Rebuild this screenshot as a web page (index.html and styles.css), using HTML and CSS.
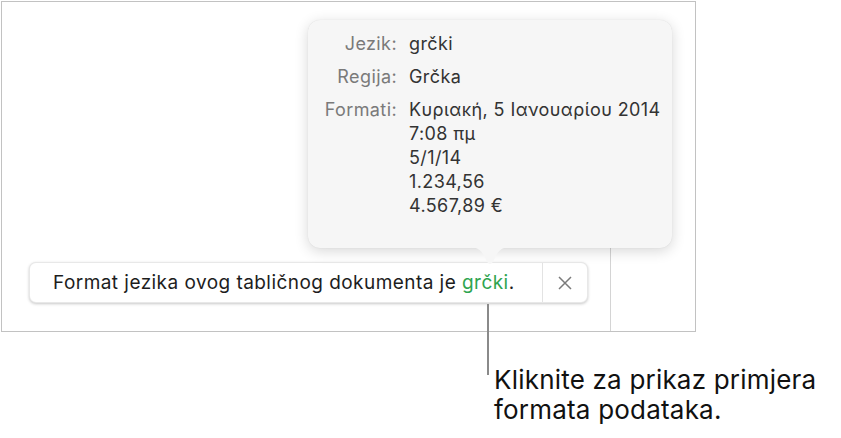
FILE: index.html
```html
<!DOCTYPE html>
<html lang="hr">
<head>
    <meta charset="UTF-8">
    <title>Format jezika</title>
    <link rel="stylesheet" href="styles.css">
</head>
<body>
    <div class="figure">
        <div class="frame">
            <div class="sheet-top"></div>
            <div class="sheet-bottom">
                <div class="sheet-left">
                    <div class="notice">
                        <div class="notice-text">Format jezika ovog tabličnog dokumenta je <span class="lang-link">grčki</span>.</div>
                        <button class="notice-close" aria-label="Zatvori">
                            <svg width="14" height="14" viewBox="0 0 14 14">
                                <path d="M1 1 L13 13 M13 1 L1 13" stroke="#7b7b7b" stroke-width="1.5" fill="none"/>
                            </svg>
                        </button>
                    </div>
                </div>
                <div class="sheet-right"></div>
            </div>

            <div class="popover">
                <div class="info-grid">
                    <div class="info-label">Jezik:</div>
                    <div class="info-value">grčki</div>
                    <div class="info-label">Regija:</div>
                    <div class="info-value">Grčka</div>
                    <div class="info-label">Formati:</div>
                    <div class="info-value">
                        Κυριακή, 5 Ιανουαρίου 2014<br>
                        7:08 πμ<br>
                        5/1/14<br>
                        1.234,56<br>
                        4.567,89 €
                    </div>
                </div>
                <svg class="popover-arrow" width="44" height="20" viewBox="0 0 44 20">
                    <path d="M0 0 C10 0 14 3 18 13 Q22 21 26 13 C30 3 34 0 44 0 Z" fill="#f6f6f6"/>
                </svg>
            </div>
        </div>

        <div class="callout">Kliknite za prikaz primjera<br>formata podataka.</div>
    </div>
</body>
</html>
```

FILE: styles.css
```css
:root {
    --frame-line: #c2c2c2;
    --grid-line: #d4d4d4;
    --popover-bg: #f6f6f6;
    --label-color: #7a7a7a;
    --value-color: #333;
    --text-color: #1d1d1d;
    --green: #2ea44f;
}

body {
    margin: 0;
    background: #fff;
    font-family: Inter, "Noto Sans", sans-serif;
    color: var(--text-color);
}

.figure {
    position: relative;
    width: 841px;
    height: 438px;
}

.frame {
    position: relative;
    margin: 1px 0 0 1px;
    width: 693px;
    height: 329px;
    border: 1px solid var(--frame-line);
    display: flex;
    flex-direction: column;
}

.sheet-top {
    height: 246px;
}

.sheet-bottom {
    flex: 1;
    display: flex;
}

.sheet-left {
    width: 608px;
    padding: 14px 0 0 27px;
    box-sizing: border-box;
}

.sheet-right {
    flex: 1;
    border-left: 1px solid var(--grid-line);
}

.notice {
    width: 559px;
    height: 41px;
    box-sizing: border-box;
    display: flex;
    align-items: stretch;
    background: #fff;
    border: 1px solid rgba(0, 0, 0, 0.09);
    border-radius: 7px;
    box-shadow: 0 1px 3px rgba(0, 0, 0, 0.22);
}

.notice-text {
    flex: 1;
    display: flex;
    align-items: center;
    padding-left: 23px;
    font-size: 19px;
    letter-spacing: 0.45px;
    white-space: pre;
}

.lang-link {
    color: var(--green);
}

.notice-close {
    width: 45px;
    border: none;
    border-left: 1px solid #e3e3e3;
    background: none;
    padding: 0;
    display: flex;
    align-items: center;
    justify-content: center;
}

.popover {
    position: absolute;
    left: 306px;
    top: 18px;
    width: 364px;
    height: 228px;
    box-sizing: border-box;
    padding: 12px 0 0 16px;
    background: var(--popover-bg);
    border-radius: 12px;
    box-shadow: 0 3px 14px rgba(0, 0, 0, 0.16), 0 0 1px rgba(0, 0, 0, 0.12);
}

.info-grid {
    display: grid;
    grid-template-columns: 73px auto;
    column-gap: 12px;
    row-gap: 9px;
    font-size: 18px;
    letter-spacing: 0.4px;
    line-height: 24px;
}

.info-label {
    text-align: right;
    color: var(--label-color);
}

.info-value {
    color: var(--value-color);
}

.popover-arrow {
    position: absolute;
    left: 160px;
    top: 100%;
    margin-top: -1px;
}

.callout {
    position: relative;
    margin: 33px 0 0 494px;
    font-size: 26px;
    letter-spacing: 0.2px;
    line-height: 30px;
    color: #111;
}

.callout::before {
    content: "";
    position: absolute;
    left: -7px;
    top: -61px;
    width: 2px;
    height: 71px;
    background: #8a8a8a;
}
```
